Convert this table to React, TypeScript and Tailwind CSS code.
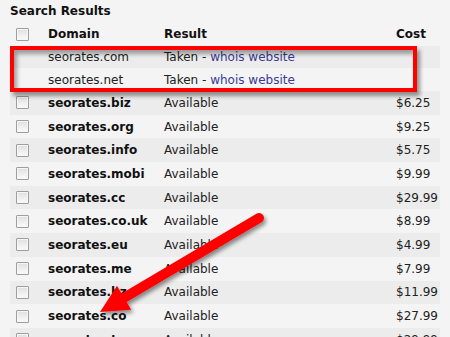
import React from "react";

type Row = { domain: string; cost: string };

const rows: Row[] = [
  { domain: "seorates.biz", cost: "$6.25" },
  { domain: "seorates.org", cost: "$9.25" },
  { domain: "seorates.info", cost: "$5.75" },
  { domain: "seorates.mobi", cost: "$9.99" },
  { domain: "seorates.cc", cost: "$29.99" },
  { domain: "seorates.co.uk", cost: "$8.99" },
  { domain: "seorates.eu", cost: "$4.99" },
  { domain: "seorates.me", cost: "$7.99" },
  { domain: "seorates.bz", cost: "$11.99" },
  { domain: "seorates.co", cost: "$27.99" },
  { domain: "seorates.tv", cost: "$29.99" },
];

function Checkbox() {
  return (
    <div className="w-[13px] h-[13px] border border-[#9e9e9e] rounded-[1px] bg-gradient-to-b from-[#dedede] to-[#fcfcfc] shadow-[inset_0_0_0_1px_#f6f6f6]" />
  );
}

const cols = "grid grid-cols-[38px_116px_232px_1fr] items-center";

export default function App() {
  return (
    <div
      className="relative w-[450px] h-[337px] overflow-hidden bg-[#f4f4f4] text-[12px] text-[#222]"
      style={{ fontFamily: '"DejaVu Sans", Verdana, sans-serif' }}
    >
      <div className="h-[22px] pl-[10px] pt-[3px] font-bold text-[#111] leading-[16px]">
        Search Results
      </div>

      <div className="ml-[10px] w-[430px]">
        <div className={`${cols} h-[24px] font-bold text-[#111]`}>
          <div className="pl-[6px]">
            <Checkbox />
          </div>
          <div>Domain</div>
          <div>Result</div>
          <div>Cost</div>
        </div>

        <div className={`${cols} h-[22px] bg-[#ececec]`}>
          <div />
          <div>seorates.com</div>
          <div>
            Taken - <span className="text-[#3a3a94]">whois website</span>
          </div>
          <div />
        </div>
        <div className={`${cols} h-[23px]`}>
          <div />
          <div>seorates.net</div>
          <div>
            Taken - <span className="text-[#3a3a94]">whois website</span>
          </div>
          <div />
        </div>

        {rows.map((r, i) => (
          <div
            key={r.domain}
            className={`${cols} h-[23.7px] ${i % 2 === 0 ? "bg-[#ececec]" : ""}`}
          >
            <div className="pl-[6px]">
              <Checkbox />
            </div>
            <div className="font-bold text-[#111]">{r.domain}</div>
            <div>Available</div>
            <div>{r.cost}</div>
          </div>
        ))}
      </div>

      {/* red highlight box */}
      <div className="absolute left-[10px] top-[46px] w-[407px] h-[46px] border-4 border-[#ff0000] shadow-[3px_4px_4px_rgba(0,0,0,0.4),inset_3px_4px_4px_rgba(0,0,0,0.35)]" />

      {/* arrow */}
      <svg className="absolute left-0 top-0 pointer-events-none" width="450" height="337">
        <defs>
          <filter id="sh" x="-20%" y="-20%" width="140%" height="140%">
            <feDropShadow dx="2" dy="3" stdDeviation="2" floodColor="#000" floodOpacity="0.45" />
          </filter>
        </defs>
        <g filter="url(#sh)">
          <line x1="122" y1="299" x2="259" y2="218" stroke="#ff0000" strokeWidth="10" strokeLinecap="round" />
          <polygon points="100,312 131.2,309.8 117,285.7" fill="#ff0000" />
        </g>
      </svg>
    </div>
  );
}
